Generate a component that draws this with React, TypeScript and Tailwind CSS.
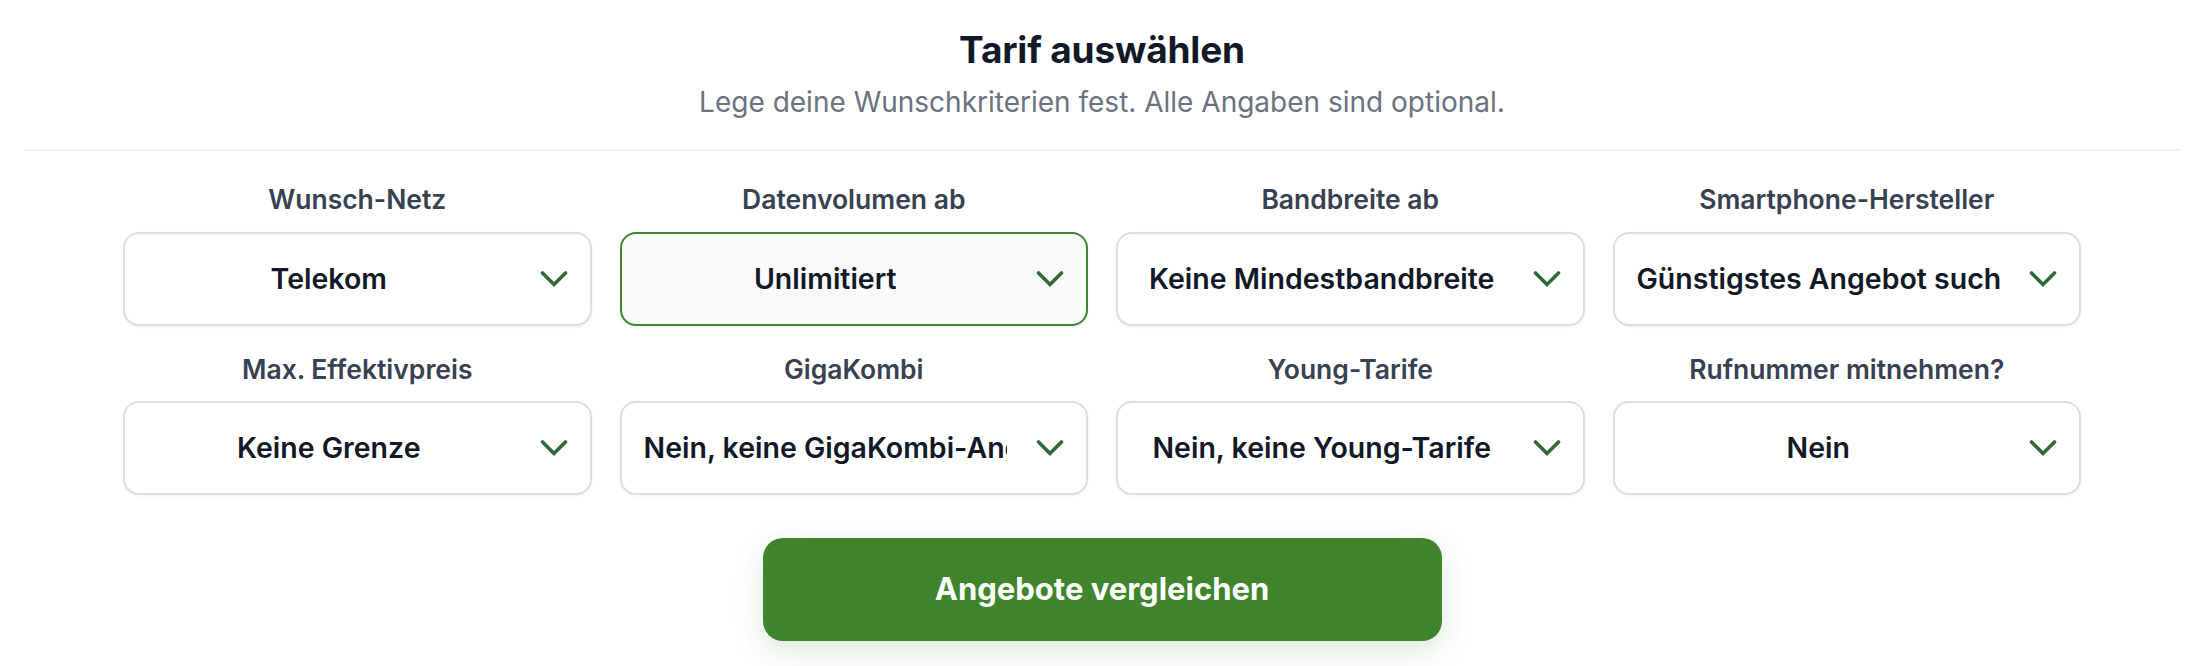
import React from 'react';

type Field = {
  label: string;
  value: string;
  active?: boolean;
};

const fields: Field[] = [
  { label: 'Wunsch-Netz', value: 'Telekom' },
  { label: 'Datenvolumen ab', value: 'Unlimitiert', active: true },
  { label: 'Bandbreite ab', value: 'Keine Mindestbandbreite' },
  { label: 'Smartphone-Hersteller', value: 'Günstigstes Angebot suchen' },
  { label: 'Max. Effektivpreis', value: 'Keine Grenze' },
  { label: 'GigaKombi', value: 'Nein, keine GigaKombi-Angebote' },
  { label: 'Young-Tarife', value: 'Nein, keine Young-Tarife' },
  { label: 'Rufnummer mitnehmen?', value: 'Nein' },
];

const Chevron = () => (
  <svg width="28" height="18" viewBox="0 0 28 18" fill="none" className="shrink-0">
    <polyline
      points="2.5,3 14,14.5 25.5,3"
      stroke="#2f6b38"
      strokeWidth="3.6"
      strokeLinecap="round"
      strokeLinejoin="miter"
    />
  </svg>
);

const SelectField = ({ label, value, active }: Field) => (
  <div className="flex flex-col items-stretch">
    <span className="text-center text-[26.5px] leading-none font-semibold text-[#374151] mb-[19px]">
      {label}
    </span>
    <div
      className={
        active
          ? 'flex items-center h-[94px] rounded-2xl border-2 border-[#3f8530] bg-[#fafaf9] pl-[22px] pr-[22px] gap-[29px] shadow-[0_1px_3px_rgba(0,0,0,0.06)]'
          : 'flex items-center h-[94px] rounded-2xl border-2 border-[#dbdfe5] bg-white pl-[22px] pr-[22px] gap-[29px] shadow-[0_1px_3px_rgba(0,0,0,0.06)]'
      }
    >
      <span className="flex-1 min-w-0 overflow-hidden whitespace-nowrap text-center text-[28.5px] leading-[1.4] font-semibold text-[#111827]">
        {value}
      </span>
      <Chevron />
    </div>
  </div>
);

export default function App() {
  return (
    <div className="w-full min-h-[666px] bg-white font-[Inter,'Noto_Sans',sans-serif]">
      <div className="px-[25px]">
        <div className="flex flex-col items-center pt-[31px]">
          <h1 className="text-[37px] leading-none font-bold text-[#111827] tracking-[-0.005em]">
            Tarif auswählen
          </h1>
          <p className="mt-[20px] text-[28px] leading-none text-[#6b7280]">
            Lege deine Wunschkriterien fest. Alle Angaben sind optional.
          </p>
        </div>
        <div className="mt-[33px] h-[2px] bg-[#f0f0f0]" />
        <div className="px-[98px] pt-[35px]">
          <div className="grid grid-cols-4 gap-x-[28px] gap-y-[30px]">
            {fields.map((f) => (
              <SelectField key={f.label} {...f} />
            ))}
          </div>
          <div className="flex justify-center mt-[43px]">
            <button className="w-[679px] h-[103px] rounded-[20px] bg-[#40852e] text-white text-[31px] font-bold shadow-[0_10px_30px_rgba(64,133,46,0.18)]">
              Angebote vergleichen
            </button>
          </div>
        </div>
      </div>
    </div>
  );
}
